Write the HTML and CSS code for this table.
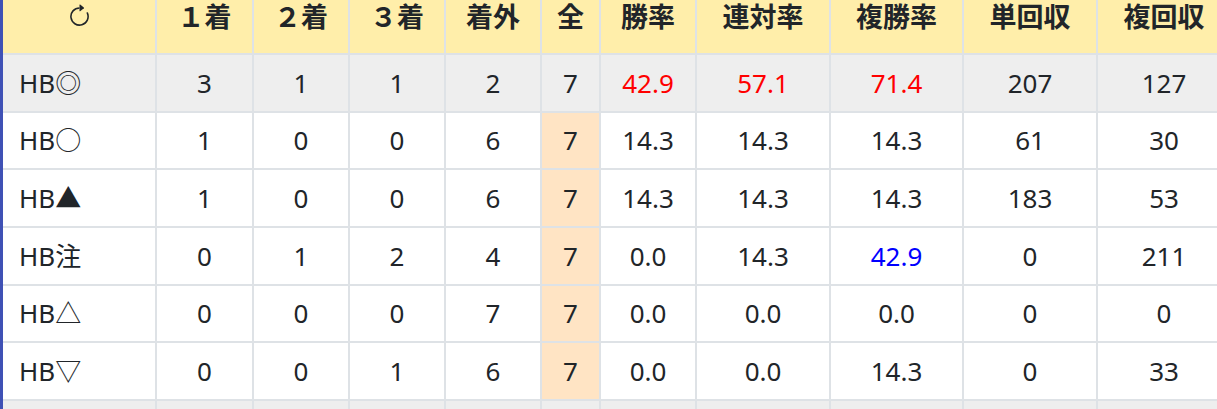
FILE: index.html
```html
<!DOCTYPE html>
<html lang="ja">
<head>
<meta charset="utf-8">
<link rel="stylesheet" href="styles.css">
</head>
<body>
<div class="frame">
<table class="stats">
<colgroup>
<col class="c-name"><col class="c-97"><col class="c-96"><col class="c-96"><col class="c-96"><col class="c-59"><col class="c-96"><col class="c-134"><col class="c-133"><col class="c-134"><col class="c-134">
</colgroup>
<thead>
<tr>
<th class="icon-cell"><svg class="reload" viewBox="0 0 16 16" width="25" height="25" aria-hidden="true"><path d="M8 3a5 5 0 1 0 4.546 2.914.5.5 0 0 1 .908-.417A6 6 0 1 1 8 2z"/><path d="M8 4.466V.534a.25.25 0 0 1 .41-.192l2.36 1.966c.12.1.12.284 0 .384L8.41 4.658A.25.25 0 0 1 8 4.466"/></svg></th>
<th>１着</th><th>２着</th><th>３着</th><th>着外</th><th>全</th><th>勝率</th><th>連対率</th><th>複勝率</th><th>単回収</th><th>複回収</th>
</tr>
</thead>
<tbody>
<tr class="hl">
<td class="name">HB◎</td><td>3</td><td>1</td><td>1</td><td>2</td><td class="all">7</td><td class="red">42.9</td><td class="red">57.1</td><td class="red">71.4</td><td>207</td><td>127</td>
</tr>
<tr>
<td class="name">HB○</td><td>1</td><td>0</td><td>0</td><td>6</td><td class="all">7</td><td>14.3</td><td>14.3</td><td>14.3</td><td>61</td><td>30</td>
</tr>
<tr>
<td class="name">HB▲</td><td>1</td><td>0</td><td>0</td><td>6</td><td class="all">7</td><td>14.3</td><td>14.3</td><td>14.3</td><td>183</td><td>53</td>
</tr>
<tr>
<td class="name">HB注</td><td>0</td><td>1</td><td>2</td><td>4</td><td class="all">7</td><td>0.0</td><td>14.3</td><td class="blue">42.9</td><td>0</td><td>211</td>
</tr>
<tr>
<td class="name">HB△</td><td>0</td><td>0</td><td>0</td><td>7</td><td class="all">7</td><td>0.0</td><td>0.0</td><td>0.0</td><td>0</td><td>0</td>
</tr>
<tr>
<td class="name">HB▽</td><td>0</td><td>0</td><td>1</td><td>6</td><td class="all">7</td><td>0.0</td><td>0.0</td><td>14.3</td><td>0</td><td>33</td>
</tr>
<tr class="hl">
<td class="name"></td><td></td><td></td><td></td><td></td><td></td><td></td><td></td><td></td><td></td><td></td>
</tr>
</tbody>
</table>
</div>
</body>
</html>
```
FILE: styles.css
```css
html, body {
  margin: 0;
  padding: 0;
  background: #ffffff;
  overflow: hidden;
}
.frame {
  border-left: 3px solid #3f51b5;
  width: 1240px;
  min-height: 409px;
}
.stats {
  border-collapse: separate;
  border-spacing: 0;
  table-layout: fixed;
  width: 1229px;
  font-family: "Noto Sans", "Noto Sans CJK JP", sans-serif;
  font-size: 26px;
  color: #212529;
}
.c-name { width: 154px; }
.c-97 { width: 97px; }
.c-96 { width: 96px; }
.c-59 { width: 59px; }
.c-134 { width: 134px; }
.c-133 { width: 133px; }
.stats th, .stats td {
  border-right: 2px solid #dee2e6;
  border-bottom: 2px solid #dee2e6;
  padding: 0;
  text-align: center;
  white-space: nowrap;
  overflow: hidden;
}
.stats thead tr { height: 55px; }
.stats th {
  background: #ffeeaa;
  font-family: "Noto Sans CJK JP", sans-serif;
  font-size: 27px;
  font-weight: 700;
  vertical-align: top;
  line-height: 32px;
  padding-top: 0;
}
.stats tbody tr { height: 57.67px; }
.stats td {
  vertical-align: middle;
  line-height: 30px;
  background: #ffffff;
}
.stats tr.hl td { background: #eeeeee; }
.stats td.all { background: #ffe4c4; }
.stats tr.hl td.all { background: #eeeeee; }
.stats td.name {
  text-align: left;
  padding-left: 16px;
}
.red { color: #ff0000; }
.blue { color: #0000ff; }
.icon-cell { line-height: 0; }
.reload {
  fill: #212529;
  margin-top: 4px;
}
```
